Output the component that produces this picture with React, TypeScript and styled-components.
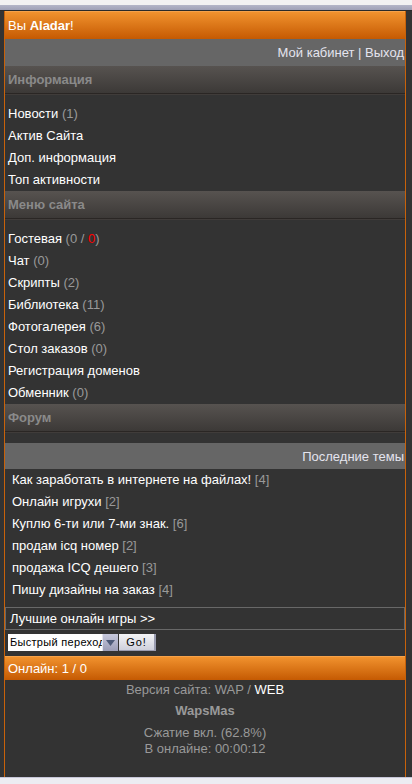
import React from 'react';
import styled, { createGlobalStyle } from 'styled-components';

const GlobalStyle = createGlobalStyle`
    html, body {
        margin: 0;
        padding: 0;
        background: #333333;
    }
    body {
        font-family: 'Liberation Sans', Arial, sans-serif;
        font-size: 13px;
        color: #ffffff;
    }
`;

const info = [
    { title: 'Новости', count: '1' },
    { title: 'Актив Сайта' },
    { title: 'Доп. информация' },
    { title: 'Топ активности' },
];

const menu = [
    { title: 'Чат', count: '0' },
    { title: 'Скрипты', count: '2' },
    { title: 'Библиотека', count: '11' },
    { title: 'Фотогалерея', count: '6' },
    { title: 'Стол заказов', count: '0' },
    { title: 'Регистрация доменов' },
    { title: 'Обменник', count: '0' },
];

const topics = [
    { title: 'Как заработать в интернете на файлах!', count: 4 },
    { title: 'Онлайн игрухи', count: 2 },
    { title: 'Куплю 6-ти или 7-ми знак.', count: 6 },
    { title: 'продам icq номер', count: 2 },
    { title: 'продажа ICQ дешего', count: 3 },
    { title: 'Пишу дизайны на заказ', count: 4 },
];

// whole mobile page of the wap site
const App = () => {
    return (
        <>
            <GlobalStyle />
            <TopStrip />
            <Page>
                <OrangeBar>Вы <b>Aladar</b>!</OrangeBar>
                <GrayBar $h={27}>Мой кабинет | Выход</GrayBar>

                <SectionTitle>Информация</SectionTitle>
                <List>
                    {info.map((item) => (
                        <Item key={item.title}>
                            {item.title}
                            {item.count && <Count> ({item.count})</Count>}
                        </Item>
                    ))}
                </List>

                <SectionTitle>Меню сайта</SectionTitle>
                <List>
                    <Item>
                        Гостевая <Count>(0 / <Red>0</Red>)</Count>
                    </Item>
                    {menu.map((item) => (
                        <Item key={item.title}>
                            {item.title}
                            {item.count && <Count> ({item.count})</Count>}
                        </Item>
                    ))}
                </List>

                <SectionTitle>Форум</SectionTitle>
                <ForumGap />
                <GrayBar $h={26}>Последние темы</GrayBar>
                <Topics>
                    {topics.map((t) => (
                        <Topic key={t.title}>
                            {t.title} <Count>[{t.count}]</Count>
                        </Topic>
                    ))}
                </Topics>

                <GamesBox>Лучшие онлайн игры &gt;&gt;</GamesBox>

                <JumpRow>
                    <FakeSelect>
                        <SelectText>Быстрый переход</SelectText>
                        <SelectArrow>
                            <svg width='9' height='6' viewBox='0 0 9 6'>
                                <path d='M0 0 L9 0 L4.5 6 Z' fill='#4d5a78' />
                            </svg>
                        </SelectArrow>
                    </FakeSelect>
                    <GoButton>Go!</GoButton>
                </JumpRow>

                <OrangeBar $small>Онлайн: 1 / 0</OrangeBar>

                <Footer>
                    <FooterLine>
                        Версия сайта: WAP / <White>WEB</White>
                    </FooterLine>
                    <SiteName>WapsMas</SiteName>
                    <Stats>
                        Сжатие вкл. (62.8%)
                        <br />
                        В онлайне: 00:00:12
                    </Stats>
                </Footer>
            </Page>
            <BottomStrip />
        </>
    );
};

const TopStrip = styled.div`
    height: 10px;
    background: linear-gradient(#f2f2f2 0, #f2f2f2 5px, #b4b6c8 5px, #9fa1b6 10px);
    border-bottom: 1px solid #2a2a2a;
`;

const BottomStrip = styled.div`
    height: 7px;
    background: linear-gradient(#c6c6d8 0, #c6c6d8 1px, #ececf2 1px);
`;

const Page = styled.div`
    margin-left: 4px;
    width: 400px;
    height: 766px;
    border-left: 1px solid #c8620a;
    border-right: 1px solid #c8620a;
    background: #333333;
    display: flex;
    flex-direction: column;
`;

const OrangeBar = styled.div<{ $small?: boolean }>`
    height: ${(p) => (p.$small ? '24px' : '28px')};
    flex-shrink: 0;
    margin-top: ${(p) => (p.$small ? '5px' : '0')};
    display: flex;
    align-items: center;
    padding-left: 3px;
    white-space: pre;
    background: linear-gradient(#f1922e, #c55a02);
    border-top: 1px solid #f6a24a;
    box-sizing: border-box;
    color: #ffffff;
    font-size: 13px;

    b {
        font-weight: bold;
    }
`;

const GrayBar = styled.div<{ $h: number }>`
    height: ${(p) => p.$h}px;
    flex-shrink: 0;
    background: #666666;
    display: flex;
    align-items: center;
    justify-content: flex-end;
    padding-right: 1px;
    color: #e4e4ee;
    font-size: 13px;
`;

const SectionTitle = styled.div`
    height: 28px;
    flex-shrink: 0;
    box-sizing: border-box;
    display: flex;
    align-items: center;
    padding-left: 3px;
    background: linear-gradient(#575350, #3c3937);
    border-bottom: 1px solid #2a2624;
    box-shadow: 0 1px 0 #403c3a;
    color: #8a8a8a;
    font-weight: bold;
    font-size: 13px;
`;

const List = styled.div`
    display: flex;
    flex-direction: column;
    padding-top: 9px;
`;

const Item = styled.div`
    height: 22px;
    line-height: 22px;
    padding-left: 3px;
    color: #ffffff;
`;

const Count = styled.span`
    color: #999999;
`;

const Red = styled.span`
    color: #ff0000;
`;

const ForumGap = styled.div`
    height: 11px;
    flex-shrink: 0;
`;

const Topics = styled.div`
    display: flex;
    flex-direction: column;
    padding-bottom: 6px;
`;

const Topic = styled.div`
    height: 22px;
    line-height: 22px;
    padding-left: 7px;
    color: #ffffff;
`;

const GamesBox = styled.div`
    height: 21px;
    line-height: 21px;
    flex-shrink: 0;
    border: 1px solid #686868;
    padding-left: 4px;
    color: #ffffff;
`;

const JumpRow = styled.div`
    display: flex;
    align-items: center;
    gap: 1px;
    padding: 4px 0 0 3px;
    height: 17px;
    flex-shrink: 0;
`;

const FakeSelect = styled.div`
    display: flex;
    height: 17px;
    background: #ffffff;
`;

const SelectText = styled.span`
    width: 92px;
    padding-left: 2px;
    line-height: 17px;
    color: #000000;
    font-family: 'Liberation Sans', Arial, sans-serif;
    font-size: 11px;
    letter-spacing: 0.3px;
    white-space: nowrap;
`;

const SelectArrow = styled.span`
    width: 15px;
    display: flex;
    align-items: center;
    justify-content: center;
    background: linear-gradient(#c6c8dc, #9a9cb6);
    border-left: 1px solid #e4e4ee;
`;

const GoButton = styled.div`
    width: 37px;
    height: 17px;
    box-sizing: border-box;
    display: flex;
    align-items: center;
    justify-content: center;
    background: linear-gradient(#f4f4f6, #cfd0dc);
    border-right: 2px solid #9a9cb0;
    border-bottom: 1px solid #9a9cb0;
    color: #000000;
    font-family: 'Liberation Sans', Arial, sans-serif;
    font-size: 11px;
    letter-spacing: 1px;
`;

const Footer = styled.div`
    display: flex;
    flex-direction: column;
    align-items: center;
    padding-top: 2px;
    color: #999999;
`;

const FooterLine = styled.div`
    line-height: 16px;
`;

const White = styled.span`
    color: #ffffff;
`;

const SiteName = styled.div`
    margin-top: 5px;
    line-height: 16px;
    font-weight: bold;
`;

const Stats = styled.div`
    line-height: 16px;
    text-align: center;
    padding-top: 6px;
`;

export default App;
